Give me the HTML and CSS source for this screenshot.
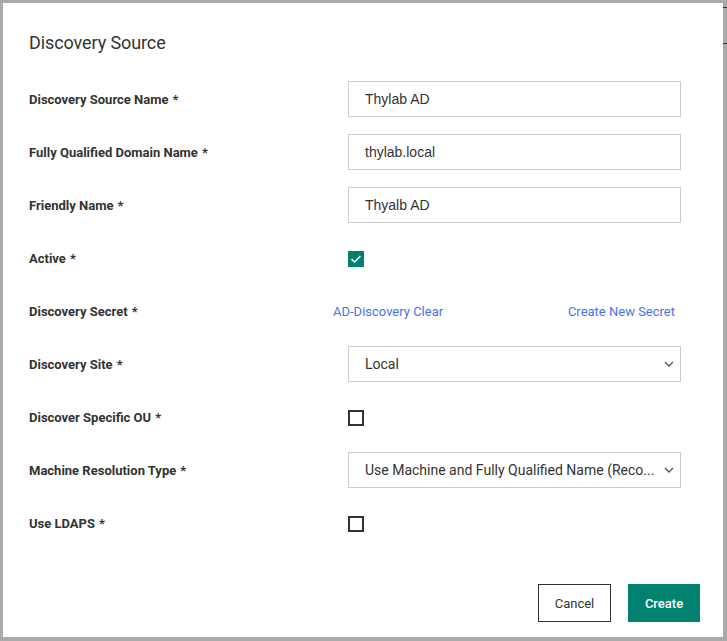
FILE: index.html
```html
<!DOCTYPE html>
<html>
<head>
<meta charset="utf-8">
<link rel="stylesheet" href="styles.css">
</head>
<body>
<div class="behind"></div>
<div class="dialog">
  <div class="header"><h1 class="title">Discovery Source</h1></div>
  <div class="form">
    <div class="label">Discovery Source Name <span class="req">*</span></div>
    <div class="control top"><div class="input">Thylab AD</div></div>

    <div class="label">Fully Qualified Domain Name <span class="req">*</span></div>
    <div class="control top"><div class="input">thylab.local</div></div>

    <div class="label">Friendly Name <span class="req">*</span></div>
    <div class="control top"><div class="input">Thyalb AD</div></div>

    <div class="label">Active <span class="req">*</span></div>
    <div class="control"><span class="checkbox checked"><svg width="16" height="16" viewBox="0 0 16 16"><path d="M3.5 8.2 L6.6 11 L12.4 5" fill="none" stroke="#fff" stroke-width="1.6"/></svg></span></div>

    <div class="label">Discovery Secret <span class="req">*</span></div>
    <div class="control"><div class="links"><a class="link">AD-Discovery Clear</a><a class="link">Create New Secret</a></div></div>

    <div class="label">Discovery Site <span class="req">*</span></div>
    <div class="control top"><div class="input select"><span class="sel-text">Local</span><svg class="chev" width="10" height="6" viewBox="0 0 10 6"><path d="M1 1 L5 5 L9 1" fill="none" stroke="#555" stroke-width="1.3"/></svg></div></div>

    <div class="label">Discover Specific OU <span class="req">*</span></div>
    <div class="control"><span class="checkbox"></span></div>

    <div class="label">Machine Resolution Type <span class="req">*</span></div>
    <div class="control top"><div class="input select"><span class="sel-text">Use Machine and Fully Qualified Name (Reco...</span><svg class="chev" width="10" height="6" viewBox="0 0 10 6"><path d="M1 1 L5 5 L9 1" fill="none" stroke="#555" stroke-width="1.3"/></svg></div></div>

    <div class="label">Use LDAPS <span class="req">*</span></div>
    <div class="control"><span class="checkbox"></span></div>
  </div>
  <div class="footer">
    <button class="btn btn-cancel">Cancel</button>
    <button class="btn btn-create">Create</button>
  </div>
</div>
</body>
</html>
```
FILE: styles.css
```css
html, body {
  margin: 0;
  padding: 0;
}
body {
  position: relative;
  background: #aaaaaa;
  font-family: Roboto, "Liberation Sans", sans-serif;
  color: #333;
  width: 727px;
  height: 641px;
  overflow: hidden;
}
.behind {
  position: absolute;
  top: 7px;
  right: 0;
  width: 4px;
  height: 37px;
  box-sizing: border-box;
  border-top: 1px solid #333;
  border-bottom: 1px solid #333;
}
.dialog {
  position: relative;
  margin: 3px 4px 0 3px;
  width: 720px;
  height: 634px;
  background: #fff;
  box-sizing: border-box;
  padding-left: 26px;
  display: flex;
  flex-direction: column;
}
.header {
  height: 70px;
  box-sizing: border-box;
  padding-top: 8px;
  display: flex;
  align-items: center;
}
.title {
  margin: 0;
  font-size: 18px;
  font-weight: 400;
  color: #333;
  letter-spacing: -0.1px;
}
.form {
  display: grid;
  grid-template-columns: 319px 333px;
  grid-auto-rows: 53px;
}
.label {
  display: flex;
  align-items: center;
  font-size: 13px;
  font-weight: 700;
  color: #333;
}
.req {
  margin-left: 4px;
}
.control {
  display: flex;
  align-items: center;
}
.control.top {
  align-items: flex-start;
  padding-top: 8px;
}
.input {
  box-sizing: border-box;
  width: 333px;
  height: 36px;
  border: 1px solid #cccccc;
  padding: 0 16px;
  display: flex;
  align-items: center;
  font-family: "Liberation Sans", Arial, sans-serif;
  font-size: 14px;
  color: #333;
}
.select {
  font-family: Roboto, "Liberation Sans", sans-serif;
  justify-content: space-between;
  padding-right: 6px;
}
.sel-text {
  white-space: nowrap;
}
.chev {
  display: block;
}
.checkbox {
  box-sizing: border-box;
  width: 16px;
  height: 16px;
  border: 2px solid #333;
  display: block;
}
.checkbox.checked {
  border: none;
  background: #00826f;
}
.checkbox svg {
  display: block;
}
.links {
  width: 342px;
  margin-left: -15px;
  display: flex;
  justify-content: space-between;
}
.link {
  color: #4a72e8;
  font-size: 13px;
  cursor: pointer;
}
.footer {
  margin-top: auto;
  height: 53px;
  display: flex;
  justify-content: flex-end;
  align-items: flex-start;
  gap: 17px;
  padding-right: 23px;
}
.btn {
  box-sizing: border-box;
  height: 38px;
  font-family: Roboto, "Liberation Sans", sans-serif;
  font-size: 13px;
  padding: 0;
}
.btn-cancel {
  width: 73px;
  background: #fff;
  border: 1px solid #333;
  color: #333;
}
.btn-create {
  width: 72px;
  background: #00826f;
  border: none;
  color: #fff;
  font-weight: 500;
}
```
